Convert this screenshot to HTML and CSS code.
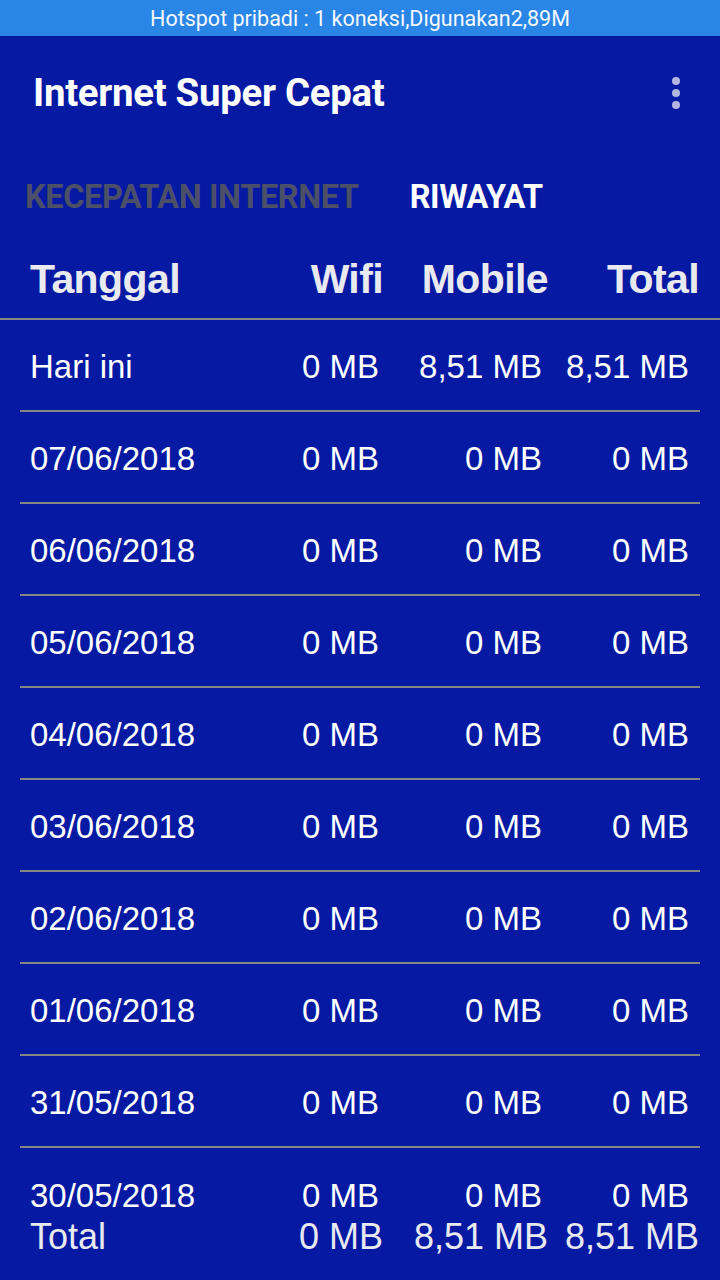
FILE: index.html
```html
<!DOCTYPE html>
<html lang="id">
<head>
	<meta charset="UTF-8">
	<title>Internet Super Cepat</title>
	<link rel="stylesheet" href="styles.css">
</head>
<body>
<div class="screen">
	<div class="status">Hotspot pribadi : 1 koneksi,Digunakan2,89M</div>

	<header class="appbar">
		<h1>Internet Super Cepat</h1>
		<span class="menu"><i></i><i></i><i></i></span>
	</header>

	<nav class="tabs">
		<span class="tab">KECEPATAN INTERNET</span>
		<span class="tab active">RIWAYAT</span>
	</nav>

	<div class="head">
		<span class="date">Tanggal</span>
		<span class="wifi">Wifi</span>
		<span class="mobile">Mobile</span>
		<span class="total">Total</span>
	</div>

	<div class="list">
		<div class="row"><span class="date">Hari ini</span><span class="wifi">0 MB</span><span class="mobile">8,51 MB</span><span class="total">8,51 MB</span></div>
		<div class="row"><span class="date">07/06/2018</span><span class="wifi">0 MB</span><span class="mobile">0 MB</span><span class="total">0 MB</span></div>
		<div class="row"><span class="date">06/06/2018</span><span class="wifi">0 MB</span><span class="mobile">0 MB</span><span class="total">0 MB</span></div>
		<div class="row"><span class="date">05/06/2018</span><span class="wifi">0 MB</span><span class="mobile">0 MB</span><span class="total">0 MB</span></div>
		<div class="row"><span class="date">04/06/2018</span><span class="wifi">0 MB</span><span class="mobile">0 MB</span><span class="total">0 MB</span></div>
		<div class="row"><span class="date">03/06/2018</span><span class="wifi">0 MB</span><span class="mobile">0 MB</span><span class="total">0 MB</span></div>
		<div class="row"><span class="date">02/06/2018</span><span class="wifi">0 MB</span><span class="mobile">0 MB</span><span class="total">0 MB</span></div>
		<div class="row"><span class="date">01/06/2018</span><span class="wifi">0 MB</span><span class="mobile">0 MB</span><span class="total">0 MB</span></div>
		<div class="row"><span class="date">31/05/2018</span><span class="wifi">0 MB</span><span class="mobile">0 MB</span><span class="total">0 MB</span></div>
		<div class="row"><span class="date">30/05/2018</span><span class="wifi">0 MB</span><span class="mobile">0 MB</span><span class="total">0 MB</span></div>
	</div>

	<div class="sum">
		<span class="date">Total</span>
		<span class="wifi">0 MB</span>
		<span class="mobile">8,51 MB</span>
		<span class="total">8,51 MB</span>
	</div>
</div>
</body>
</html>
```

FILE: styles.css
```css
body {
	margin: 0;
	background: #0519a3;
}

.screen {
	position: relative;
	width: 720px;
	height: 1280px;
	overflow: hidden;
	background: #0519a3;
	color: #fff;
	font-family: "Liberation Sans", Arial, sans-serif;
}

.status {
	height: 36px;
	line-height: 38px;
	background: #2a86e6;
	text-align: center;
	font-family: Roboto, sans-serif;
	font-size: 21.5px;
	color: #f4f8ff;
}

.appbar {
	height: 118px;
	display: flex;
	align-items: center;
	justify-content: space-between;
	padding: 0 40px 6px 33px;
	box-sizing: border-box;
}

.appbar h1 {
	margin: 0;
	font-family: Roboto, sans-serif;
	font-weight: 700;
	font-size: 38.4px;
	letter-spacing: -0.3px;
}

.menu {
	display: flex;
	flex-direction: column;
	gap: 4px;
	margin-top: 2px;
}

.menu i {
	width: 8px;
	height: 8px;
	border-radius: 50%;
	background: #b3b6e3;
}

/* tabs */
.tabs {
	display: flex;
	gap: 51px;
	height: 86px;
	padding: 0 0 0 25px;
	align-items: center;
	box-sizing: border-box;
}

.tab {
	font-family: Roboto, sans-serif;
	font-weight: 700;
	font-size: 32.5px;
	letter-spacing: -0.4px;
	color: #4b4f68;
}

.tab.active {
	color: #fff;
}

/* table */
.head, .sum {
	display: grid;
	grid-template-columns: 1fr 130px 165px 151px;
	align-items: center;
	padding: 0 21px 0 30px;
}

.head {
	height: 78px;
	border-bottom: 2px solid #868686;
	font-weight: 700;
	font-size: 41px;
	letter-spacing: -0.6px;
	color: #e9e9f0;
}

.wifi, .mobile, .total {
	text-align: right;
}

.list {
	padding: 0 20px;
}

.row {
	display: grid;
	grid-template-columns: 1fr 130px 163px 147px;
	align-items: center;
	height: 90px;
	padding: 4px 11px 0 10px;
	box-sizing: border-box;
	height: 92px;
	border-bottom: 2px solid #868686;
	font-size: 33px;
	color: #fff;
}

.row:last-child {
	border-bottom: 0;
}

.sum {
	position: absolute;
	left: 0;
	right: 0;
	bottom: 22px;
	font-size: 36px;
	color: #e9e9f0;
}
```
